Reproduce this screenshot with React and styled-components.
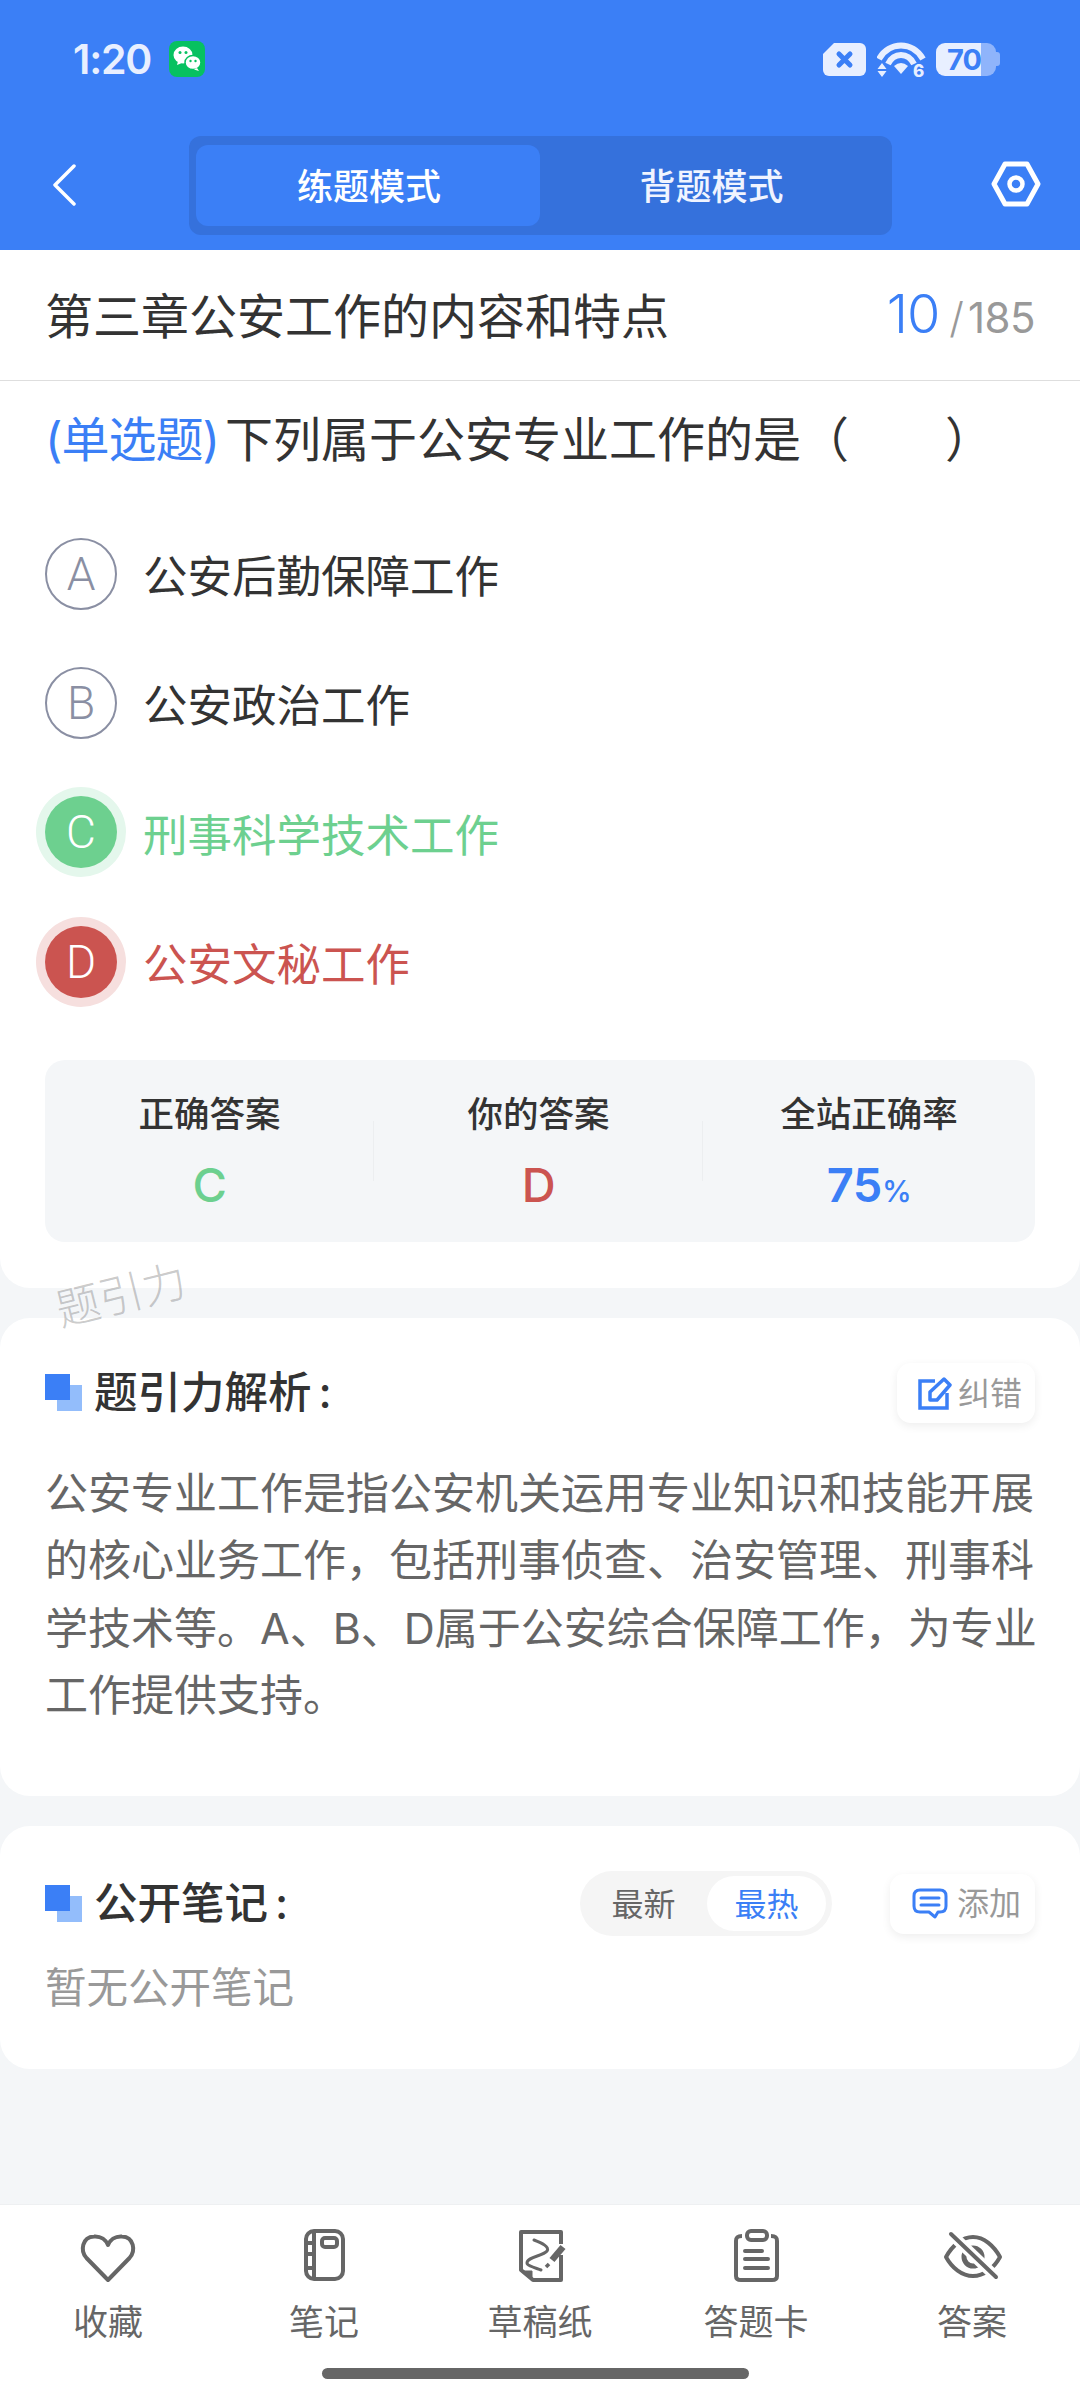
import React from "react";
import styled, { createGlobalStyle } from "styled-components";

const Global = createGlobalStyle`
  html, body { margin: 0; padding: 0; background: #f4f6f8; }
  body { font-family: Inter, "Noto Sans CJK SC", sans-serif; }
  * { box-sizing: border-box; }
`;

const BLUE = "#3b7ff6";
const GREEN = "#6dd08f";
const RED = "#cb5450";

const Root = styled.div`
  position: relative;
  width: 1080px;
  height: 2400px;
  display: flex;
  flex-direction: column;
  background: #f4f6f8;
  overflow: hidden;
`;

const Header = styled.header`
  height: 250px;
  background: ${BLUE};
  display: flex;
  flex-direction: column;
`;

const StatusBar = styled.div`
  height: 136px;
  padding: 41px 80px 0 73px;
  display: flex;
  justify-content: space-between;
  align-items: flex-start;
`;

const StatusLeft = styled.div`
  display: flex;
  align-items: center;
  gap: 18px;
  height: 36px;
`;

const StatusRight = styled.div`
  display: flex;
  align-items: center;
  gap: 11px;
  height: 36px;
`;

const Clock = styled.span`
  font-size: 41px;
  font-weight: 600;
  color: #e8efff;
  letter-spacing: -1.2px;
  line-height: 36px;
`;

const Battery = styled.div`
  width: 64px;
  height: 33px;
  display: flex;
  align-items: center;
`;

const BatteryFill = styled.div`
  width: 45px;
  height: 33px;
  background: #e8efff;
  border-radius: 9px 0 0 9px;
  display: flex;
  align-items: center;
  justify-content: flex-end;
  font-size: 29px;
  line-height: 33px;
  font-weight: 700;
  color: ${BLUE};
  letter-spacing: -1px;
`;

const BatteryRest = styled.div`
  width: 15px;
  height: 33px;
  background: #8fb4fb;
  border-radius: 0 9px 9px 0;
`;

const BatteryTip = styled.div`
  width: 4px;
  height: 14px;
  background: #8fb4fb;
  border-radius: 0 3px 3px 0;
`;

const WifiSvg = styled.svg`
  margin: 6px -4px 0 0;
`;

const Nav = styled.nav`
  height: 99px;
  display: grid;
  grid-template-columns: 189px 703px 1fr;
  align-items: center;
`;

const BackCell = styled.div`
  padding: 0 0 2px 50px;
  display: flex;
`;

const SettingsCell = styled.div`
  display: flex;
  justify-content: flex-end;
  padding: 0 39px 3px 0;
`;

const ModeTabs = styled.div`
  height: 99px;
  padding: 9px 7px;
  background: #3571dc;
  border-radius: 12px;
  display: grid;
  grid-template-columns: 344px 1fr;
`;

const ModeTab = styled.div`
  display: flex;
  align-items: center;
  justify-content: center;
  border-radius: 12px;
  padding: ${(p) => (p.$active ? "0 0 4px 2px" : "0 2px 4px 0")};
  font-size: 36px;
  font-weight: 500;
  color: ${(p) => (p.$active ? "#fff" : "#f0f4ff")};
  background: ${(p) => (p.$active ? BLUE : "transparent")};
`;

const Card = styled.section`
  background: #fff;
  border-radius: 30px;
  margin-top: 30px;
  padding: ${(p) => p.$padding};
`;

const QuestionCard = styled.section`
  background: #fff;
  border-radius: 0 0 30px 30px;
  height: 1038px;
`;

const TitleRow = styled.div`
  height: 131px;
  padding: 0 45px 0 45px;
  display: flex;
  align-items: center;
  justify-content: space-between;
  border-bottom: 1px solid #dedede;
`;

const ChapterTitle = styled.h1`
  margin: 0 0 5px;
  font-size: 48px;
  font-weight: 400;
  color: #333;
`;

const Counter = styled.div`
  display: flex;
  align-items: baseline;
  font-weight: 300;
  margin-bottom: 3px;
`;

const CounterNow = styled.span`
  font-size: 54px;
  color: ${BLUE};
  letter-spacing: -1px;
  margin-right: 10px;
`;

const CounterSlash = styled.span`
  font-size: 42px;
  color: #999;
  margin-right: 4px;
`;

const CounterTotal = styled.span`
  font-size: 42px;
  font-weight: 400;
  letter-spacing: -0.5px;
  color: #999;
`;

const Question = styled.div`
  margin: 25px 0 35px;
  padding-left: 45px;
  font-size: 48px;
  line-height: 68px;
  color: #333;
  white-space: nowrap;
`;

const QuestionType = styled.span`
  color: ${BLUE};
  letter-spacing: -1px;
  margin-right: 6px;
`;

const Option = styled.div`
  height: 129.3px;
  padding-left: 45px;
  display: flex;
  align-items: center;
  gap: 26px;
  font-size: 44.5px;
  color: ${(p) => p.$color || "#333"};
`;

const Letter = styled.span`
  width: 72px;
  height: 72px;
  border-radius: 50%;
  display: flex;
  align-items: center;
  justify-content: center;
  font-family: Roboto, sans-serif;
  font-size: 46px;
  font-weight: 300;
  color: ${(p) => (p.$fill ? "#fff" : "#8a8fa3")};
  background: ${(p) => p.$fill || "transparent"};
  border: ${(p) => (p.$fill ? "none" : "2px solid #8a8fa3")};
  box-shadow: ${(p) => (p.$halo ? `0 0 0 9px ${p.$halo}` : "none")};
`;

const Stats = styled.div`
  margin: 34px 45px 0;
  height: 182px;
  background: #f4f6f8;
  border-radius: 20px;
  display: grid;
  grid-template-columns: 329px 329px 1fr;
`;

const Stat = styled.div`
  position: relative;
  padding-top: 30px;
  display: flex;
  flex-direction: column;
  align-items: center;
  &:not(:last-child)::after {
    content: "";
    position: absolute;
    right: 0;
    top: 61px;
    width: 1px;
    height: 60px;
    background: #eceef0;
  }
`;

const StatLabel = styled.span`
  font-size: 35.5px;
  line-height: 50px;
  font-weight: 500;
  color: #333;
`;

const StatValue = styled.span`
  margin-top: 15px;
  font-size: 47px;
  line-height: 60px;
  font-weight: ${(p) => p.$weight || 500};
  letter-spacing: -0.5px;
  color: ${(p) => p.$color};
`;

const Percent = styled.small`
  font-size: 30px;
  font-weight: 500;
`;

const SectionHead = styled.div`
  display: flex;
  align-items: center;
  justify-content: space-between;
`;

const SectionTitle = styled.h2`
  margin: 0;
  padding-bottom: 2px;
  display: flex;
  align-items: center;
  font-size: 43.5px;
  line-height: 52px;
  font-weight: 500;
  color: #333;
`;

const Marker = styled.span`
  width: 25px;
  height: 26px;
  margin: 0 24px 10px 0;
  background: ${BLUE};
  box-shadow: 12px 11px 0 #93bdfb;
`;

const Colon = styled.span`
  margin-left: 7px;
`;

const ActionButton = styled.div`
  height: 60px;
  width: ${(p) => p.$width}px;
  padding: 0 0 0 ${(p) => p.$inset}px;
  border-radius: 14px;
  background: #fff;
  box-shadow: 0 3px 10px rgba(0, 0, 0, 0.07);
  display: flex;
  align-items: center;
  gap: ${(p) => p.$gap}px;
  font-size: 32px;
  color: #999;
`;

const ActionLabel = styled.span`
  padding-bottom: 5px;
`;

const Explanation = styled.p`
  margin: 37px -20px 0 0;
  font-size: 43px;
  line-height: 67.4px;
  color: #666;
`;

const NoteControls = styled.div`
  display: flex;
  align-items: center;
  gap: 58px;
`;

const Segment = styled.div`
  width: 252px;
  height: 65px;
  padding: 5px 6px 5px 0;
  border-radius: 33px;
  background: #f5f5f5;
  display: grid;
  grid-template-columns: 127px 119px;
`;

const SegmentItem = styled.span`
  display: flex;
  align-items: center;
  justify-content: center;
  padding-bottom: 4px;
  border-radius: 28px;
  font-size: 32px;
  color: ${(p) => (p.$active ? BLUE : "#666")};
  background: ${(p) => (p.$active ? "#fff" : "transparent")};
`;

const Empty = styled.div`
  margin-top: 22px;
  font-size: 41.5px;
  line-height: 60px;
  color: #999;
`;

const Footer = styled.footer`
  margin-top: auto;
  height: 196px;
  background: #fff;
  border-top: 1px solid #eef0f2;
  padding-top: 23px;
`;

const FooterGrid = styled.div`
  display: grid;
  grid-template-columns: repeat(5, 216px);
`;

const FooterItem = styled.div`
  display: flex;
  flex-direction: column;
  align-items: center;
  gap: 16px;
  font-size: 35px;
  line-height: 44px;
  color: #666;
`;

const HomeBar = styled.div`
  width: 427px;
  height: 11px;
  margin: 24px 0 0 322px;
  border-radius: 6px;
  background: #666;
`;

const Watermark = styled.div`
  position: absolute;
  left: 55px;
  top: 1265px;
  font-size: 44px;
  line-height: 60px;
  font-weight: 300;
  color: rgba(120, 120, 120, 0.4);
  transform: rotate(-14deg);
`;

const WeChat = () => (
  <svg width="36" height="36" viewBox="0 0 36 36">
    <rect width="36" height="36" rx="8" fill="#07c160" />
    <ellipse cx="14" cy="14" rx="9.5" ry="8.5" fill="#fff" />
    <path d="M9 20l-1 4 5-2z" fill="#fff" />
    <ellipse cx="24" cy="21.5" rx="8" ry="7" fill="#fff" stroke="#07c160" strokeWidth="1.5" />
    <path d="M28 27l2 3-5-1.5z" fill="#fff" />
    <circle cx="11" cy="11.5" r="1.5" fill="#07c160" />
    <circle cx="17" cy="11.5" r="1.5" fill="#07c160" />
    <circle cx="21.5" cy="20" r="1.2" fill="#07c160" />
    <circle cx="26.5" cy="20" r="1.2" fill="#07c160" />
  </svg>
);

const XTag = () => (
  <svg width="43" height="33" viewBox="0 0 43 33">
    <path d="M11 0H37a6 6 0 0 1 6 6V27a6 6 0 0 1-6 6H6a6 6 0 0 1-6-6V11z" fill="#e8efff" />
    <path d="M16 11l11 11M27 11L16 22" stroke={BLUE} strokeWidth="5" strokeLinecap="round" />
  </svg>
);

const Wifi = () => (
  <WifiSvg width="52" height="42" viewBox="0 0 52 42">
    <g fill="none" stroke="#e8efff" strokeWidth="6">
      <path d="M2 18C12 0 36 0 46 18" />
      <path d="M11 23C17 11 31 11 37 23" />
    </g>
    <path d="M17 25Q24 19 31 25L24 33z" fill="#e8efff" />
    <path d="M5 22l4.500 6H0.500zM5 36l4.500-6H0.500z" fill="#e8efff" />
    <text x="36" y="36" fontSize="17" fontWeight="800" fill="#e8efff" fontFamily="Inter">6</text>
  </WifiSvg>
);

const Back = () => (
  <svg width="26" height="44" viewBox="0 0 26 44">
    <path d="M24 3L5 22l19 19" fill="none" stroke="#fff" strokeWidth="3.500" strokeLinecap="round" strokeLinejoin="round" />
  </svg>
);

const Hexagon = () => (
  <svg width="50" height="46" viewBox="0 0 50 46">
    <path d="M14 3H36L47 23 36 43H14L3 23z" fill="none" stroke="#fff" strokeWidth="5" strokeLinejoin="round" />
    <circle cx="25" cy="23" r="6.500" fill="none" stroke="#fff" strokeWidth="4.500" />
  </svg>
);

const EditIcon = () => (
  <svg width="34" height="34" viewBox="0 0 34 34" fill="none" stroke={BLUE} strokeWidth="3.500">
    <path d="M17 5H2V32H29V17" />
    <path d="M12 24V16L26 3l6 6L19 24z" strokeLinejoin="round" />
  </svg>
);

const ChatIcon = () => (
  <svg width="36" height="32" viewBox="0 0 36 32" fill="none" stroke={BLUE} strokeWidth="3">
    <path d="M8 2H28C32 2 34 4 34 8V18C34 22 32 24 28 24H26L23 29 17 24H8C4 24 2 22 2 18V8C2 4 4 2 8 2Z" strokeLinejoin="round" />
    <path d="M9 10H27M9 17H27" strokeLinecap="round" />
  </svg>
);

const TabSvg = ({ children }) => (
  <svg width="60" height="56" viewBox="0 0 60 56" fill="none" stroke="#666" strokeWidth="4" overflow="visible">
    {children}
  </svg>
);

const HeartIcon = () => (
  <TabSvg>
    <path d="M30 52L8.500 30C2 23 4 9 16 8.500C23 8 28 12 30 17C32 12 37 8 44 8.500C56 9 58 23 51.500 30Z" strokeLinejoin="round" />
  </TabSvg>
);

const NotebookIcon = () => (
  <TabSvg>
    <rect x="12" y="3" width="37" height="48" rx="8" />
    <path d="M20 3V51M12 15H20M12 26H20M12 40H20" />
    <rect x="28" y="10" width="15" height="9" rx="3" />
  </TabSvg>
);

const DraftIcon = () => (
  <TabSvg>
    <path d="M51 16V4H11V42L23 52H51V27" strokeLinejoin="round" />
    <path d="M12 43H22V51Z" fill="#666" strokeWidth="1" />
    <path d="M24 12C32 15 40 19 37 23C33 28 17 29 17 35C17 38 26 40 31 42" strokeWidth="3" strokeLinecap="round" />
    <path d="M53 19L42 32" strokeWidth="6.500" />
    <path d="M39 36L36 39" strokeWidth="3.500" />
  </TabSvg>
);

const ClipboardIcon = () => (
  <TabSvg>
    <path d="M16 8C11 8 10 10 10 13V48C10 51 12 52 15 52H46C49 52 51 51 51 48V13C51 10 50 8 45 8" />
    <rect x="21" y="3" width="20" height="9" rx="4" />
    <path d="M19 23H36M19 31H42M19 40H42" strokeLinecap="round" />
  </TabSvg>
);

const EyeOffIcon = () => (
  <TabSvg>
    <path d="M4 29C10 18 20 9 31 9C42 9 52 18 58 29C52 40 42 48 31 48C20 48 10 40 4 29Z" strokeLinejoin="round" />
    <circle cx="31" cy="29" r="9" strokeWidth="5" />
    <path d="M9 6L54 49" stroke="#fff" strokeWidth="11" />
    <path d="M9 6L54 49" strokeLinecap="round" />
  </TabSvg>
);

const options = [
  { key: "A", text: "公安后勤保障工作" },
  { key: "B", text: "公安政治工作" },
  { key: "C", text: "刑事科学技术工作", color: GREEN, halo: "#e4f7ec" },
  { key: "D", text: "公安文秘工作", color: RED, halo: "#f6dfde" },
];

const tabs = [
  { label: "收藏", Icon: HeartIcon },
  { label: "笔记", Icon: NotebookIcon },
  { label: "草稿纸", Icon: DraftIcon },
  { label: "答题卡", Icon: ClipboardIcon },
  { label: "答案", Icon: EyeOffIcon },
];

export default function App() {
  return (
    <Root>
      <Global />
      <Header>
        <StatusBar>
          <StatusLeft>
            <Clock>1:20</Clock>
            <WeChat />
          </StatusLeft>
          <StatusRight>
            <XTag />
            <Wifi />
            <Battery>
              <BatteryFill>70</BatteryFill>
              <BatteryRest />
              <BatteryTip />
            </Battery>
          </StatusRight>
        </StatusBar>
        <Nav>
          <BackCell>
            <Back />
          </BackCell>
          <ModeTabs>
            <ModeTab $active>练题模式</ModeTab>
            <ModeTab>背题模式</ModeTab>
          </ModeTabs>
          <SettingsCell>
            <Hexagon />
          </SettingsCell>
        </Nav>
      </Header>

      <QuestionCard>
        <TitleRow>
          <ChapterTitle>第三章公安工作的内容和特点</ChapterTitle>
          <Counter>
            <CounterNow>10</CounterNow>
            <CounterSlash>/</CounterSlash>
            <CounterTotal>185</CounterTotal>
          </Counter>
        </TitleRow>
        <Question>
          <QuestionType>(单选题)</QuestionType>下列属于公安专业工作的是（　　）
        </Question>
        {options.map((o) => (
          <Option key={o.key} $color={o.color}>
            <Letter $fill={o.color} $halo={o.halo}>{o.key}</Letter>
            {o.text}
          </Option>
        ))}
        <Stats>
          <Stat>
            <StatLabel>正确答案</StatLabel>
            <StatValue $color={GREEN}>C</StatValue>
          </Stat>
          <Stat>
            <StatLabel>你的答案</StatLabel>
            <StatValue $color={RED}>D</StatValue>
          </Stat>
          <Stat>
            <StatLabel>全站正确率</StatLabel>
            <StatValue $color={BLUE} $weight={600}>75<Percent>%</Percent></StatValue>
          </Stat>
        </Stats>
      </QuestionCard>

      <Card $padding="45px 45px 66.5px">
        <SectionHead>
          <SectionTitle><Marker />题引力解析<Colon>:</Colon></SectionTitle>
          <ActionButton $width={138} $inset={21} $gap={6}><EditIcon /><ActionLabel>纠错</ActionLabel></ActionButton>
        </SectionHead>
        <Explanation>
          公安专业工作是指公安机关运用专业知识和技能开展的核心业务工作，包括刑事侦查、治安管理、刑事科学技术等。A、B、D属于公安综合保障工作，为专业工作提供支持。
        </Explanation>
      </Card>

      <Card $padding="45px 45px 51px">
        <SectionHead>
          <SectionTitle><Marker />公开笔记<Colon>:</Colon></SectionTitle>
          <NoteControls>
            <Segment>
              <SegmentItem>最新</SegmentItem>
              <SegmentItem $active>最热</SegmentItem>
            </Segment>
            <ActionButton $width={145} $inset={22} $gap={9}><ChatIcon /><ActionLabel>添加</ActionLabel></ActionButton>
          </NoteControls>
        </SectionHead>
        <Empty>暂无公开笔记</Empty>
      </Card>

      <Footer>
        <FooterGrid>
          {tabs.map(({ label, Icon }) => (
            <FooterItem key={label}>
              <Icon />
              {label}
            </FooterItem>
          ))}
        </FooterGrid>
        <HomeBar />
      </Footer>

      <Watermark>题引力</Watermark>
    </Root>
  );
}
